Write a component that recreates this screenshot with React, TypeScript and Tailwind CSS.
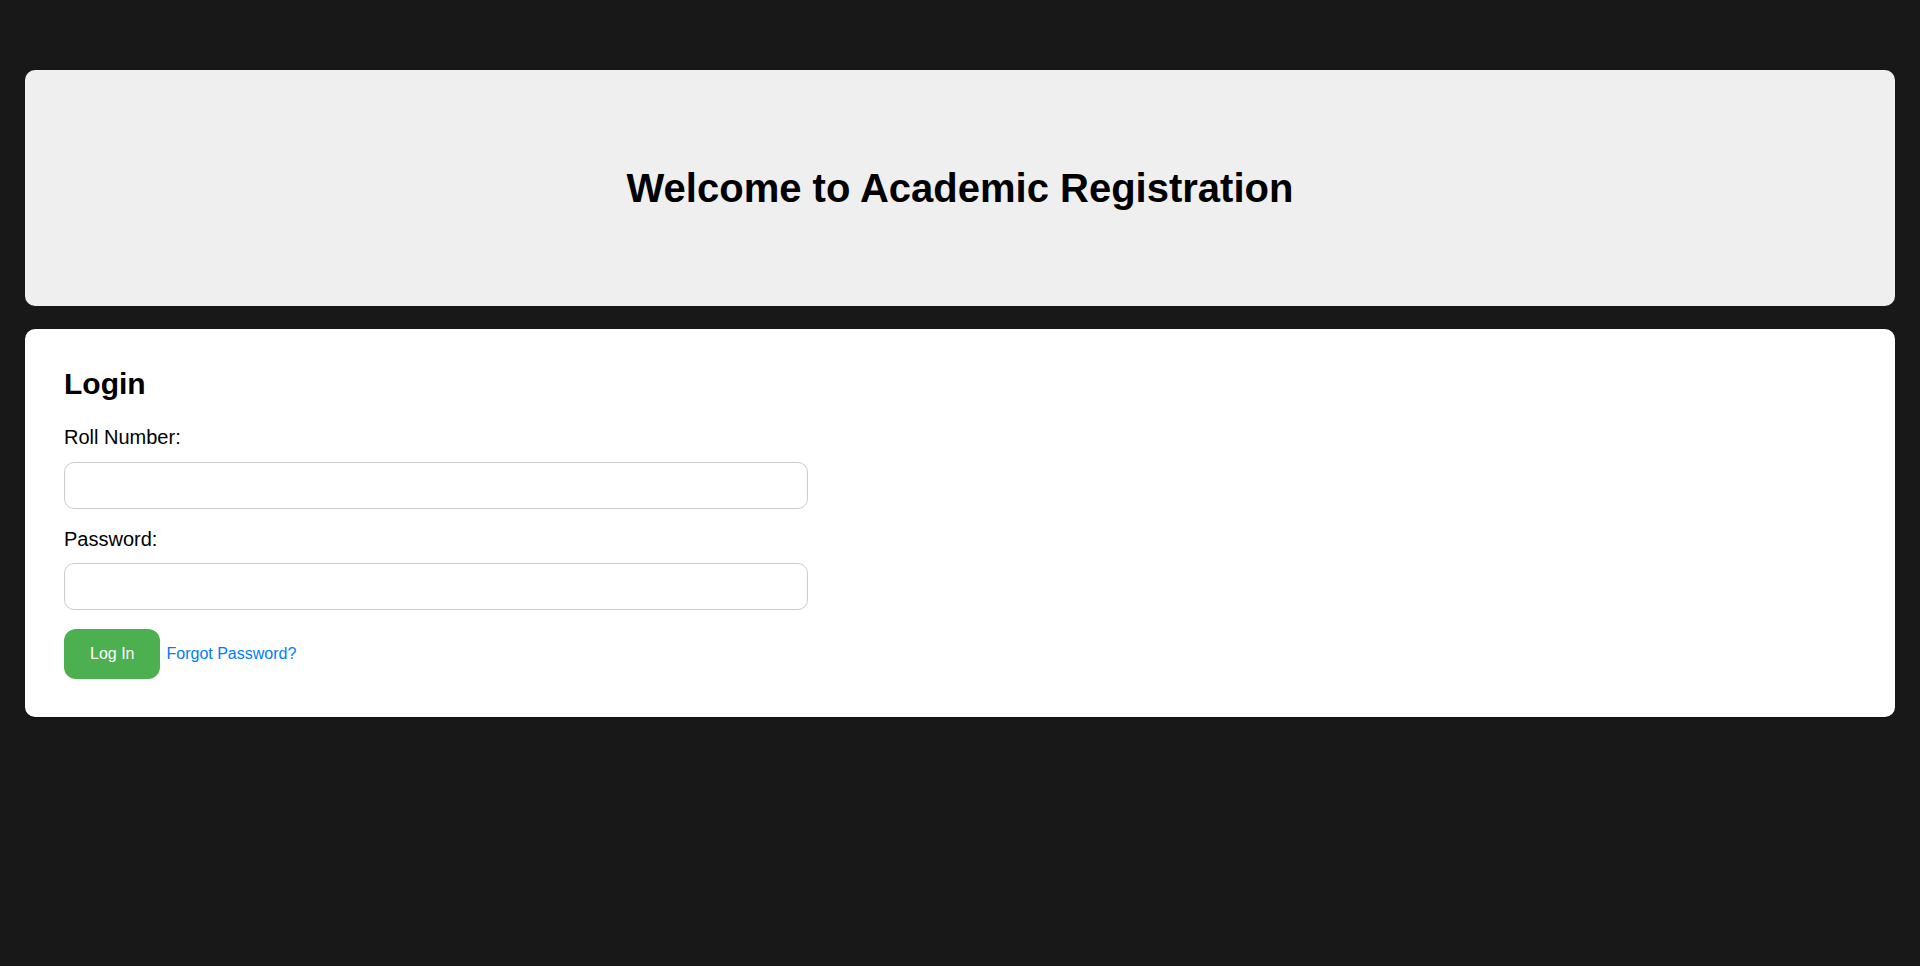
import { useState } from 'react';

export default function App() {
  const [rollNumber, setRollNumber] = useState('');
  const [password, setPassword] = useState('');

  const handleSubmit = (e: React.FormEvent) => {
    e.preventDefault();
  };

  return (
    <div className="min-h-screen bg-[#181818] px-[25px] pt-[70px] font-['Liberation_Sans',Arial,sans-serif] text-black">
      {/* Header */}
      <header className="rounded-[10px] bg-[#efefef] py-[95px] text-center">
        <h1 className="text-[40px] font-bold leading-[46px]">Welcome to Academic Registration</h1>
      </header>

      {/* Login card */}
      <section className="mt-[23px] rounded-[10px] bg-white px-[39px] pt-[37px] pb-[38px] shadow-[0_1px_2px_rgba(0,0,0,0.3)]">
        <h2 className="text-[30px] font-bold leading-[35px]">Login</h2>

        <form onSubmit={handleSubmit} className="mt-[25px]">
          <label htmlFor="roll" className="block text-[20px] leading-[23px]">
            Roll Number:
          </label>
          <input
            id="roll"
            type="text"
            value={rollNumber}
            onChange={(e) => setRollNumber(e.target.value)}
            className="mt-[13px] block h-[47px] w-[744px] rounded-[10px] border border-[#cccccc] px-3 text-[16px] outline-none"
          />

          <label htmlFor="password" className="mt-[19px] block text-[20px] leading-[23px]">
            Password:
          </label>
          <input
            id="password"
            type="password"
            value={password}
            onChange={(e) => setPassword(e.target.value)}
            className="mt-[12px] block h-[47px] w-[744px] rounded-[10px] border border-[#cccccc] px-3 text-[16px] outline-none"
          />

          <div className="mt-[19px] flex items-center gap-[6px]">
            <button
              type="submit"
              className="h-[50px] rounded-[12px] bg-[#4caf50] px-[26px] text-[16px] leading-[18px] text-white"
            >
              Log In
            </button>
            <a href="#" className="text-[16px] leading-[18px] text-[#007bff]">
              Forgot Password?
            </a>
          </div>
        </form>
      </section>
    </div>
  );
}
